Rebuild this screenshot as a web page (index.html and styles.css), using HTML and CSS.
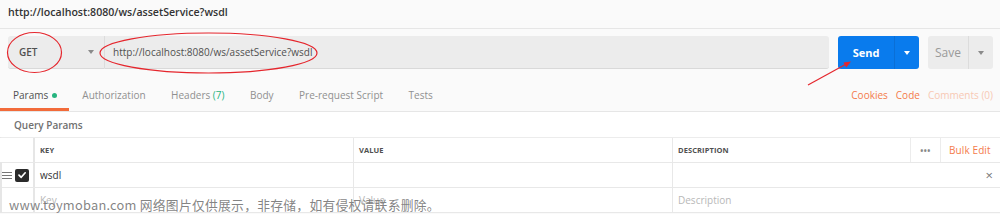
FILE: index.html
```html
<!DOCTYPE html>
<html>
<head>
<meta charset="utf-8">
<link rel="stylesheet" href="styles.css">
</head>
<body>
<div class="page">
  <div class="title-bar">http://localhost:8080/ws/assetService?wsdl</div>
  <div class="request-bar">
    <div class="method">
      <span class="method-name">GET</span>
      <span class="caret caret-gray"></span>
    </div>
    <div class="url">http://localhost:8080/ws/assetService?wsdl</div>
    <div class="send">
      <span class="send-main">Send</span>
      <span class="send-drop"><span class="caret caret-white"></span></span>
    </div>
    <div class="save">
      <span class="save-main">Save</span>
      <span class="save-drop"><span class="caret caret-gray"></span></span>
    </div>
  </div>
  <div class="tabs">
    <div class="tab active">Params <span class="dot"></span></div>
    <div class="tab">Authorization</div>
    <div class="tab">Headers <span class="green">(7)</span></div>
    <div class="tab">Body</div>
    <div class="tab">Pre-request Script</div>
    <div class="tab">Tests</div>
    <div class="tabs-right">
      <span class="link">Cookies</span>
      <span class="link">Code</span>
      <span class="link faded">Comments (0)</span>
    </div>
  </div>
  <div class="content">
    <div class="section-title">Query Params</div>
    <div class="table">
      <div class="row head">
        <div class="c-handle"></div>
        <div class="c-key">KEY</div>
        <div class="c-value">VALUE</div>
        <div class="c-desc">
          <span class="desc-label">DESCRIPTION</span>
          <span class="more">&bull;&bull;&bull;</span>
          <span class="bulk">Bulk Edit</span>
        </div>
      </div>
      <div class="row">
        <div class="c-handle">
          <span class="burger"><i></i><i></i><i></i></span>
          <span class="check">
            <svg width="10" height="10" viewBox="0 0 10 10"><path d="M2 5.2 L4.2 7.3 L8.2 2.8" fill="none" stroke="#fff" stroke-width="1.7" stroke-linecap="round" stroke-linejoin="round"/></svg>
          </span>
        </div>
        <div class="c-key">wsdl</div>
        <div class="c-value"></div>
        <div class="c-desc"><span class="desc-label"></span><span class="close">&times;</span></div>
      </div>
      <div class="row">
        <div class="c-handle"></div>
        <div class="c-key ph">Key</div>
        <div class="c-value ph">Value</div>
        <div class="c-desc ph">Description</div>
      </div>
    </div>
  </div>
  <div class="watermark">www.toymoban.com 网络图片仅供展示，非存储，如有侵权请联系删除。</div>
  <svg class="annot" width="1000" height="214" viewBox="0 0 1000 214">
    <ellipse cx="34.5" cy="52.5" rx="27" ry="20" fill="none" stroke="#e5262d" stroke-width="1.2"/>
    <ellipse cx="208.5" cy="53" rx="108.5" ry="20" fill="none" stroke="#e5262d" stroke-width="1.2"/>
    <line x1="808" y1="85" x2="849" y2="62.5" stroke="#e5262d" stroke-width="1.2"/>
    <path d="M851 61.5 L843.5 62.6 L846.3 67.4 Z" fill="#e5262d"/>
  </svg>
</div>
</body>
</html>
```
FILE: styles.css
```css
* { box-sizing: border-box; }
html, body { margin: 0; padding: 0; }
body {
  width: 1000px;
  height: 214px;
  overflow: hidden;
  background: #fafafa;
  font-family: "Open Sans", "Noto Sans", sans-serif;
  color: #505050;
}
.page { position: relative; width: 1000px; height: 214px; }

.title-bar {
  height: 29px;
  padding: 5px 0 0 8px;
  font-size: 10.6px;
  font-weight: 600;
  color: #333;
  border-bottom: 1px solid #e6e6e6;
}

.request-bar {
  display: flex;
  height: 40px;
  padding: 7px 7px 0 8px;
}
.method {
  width: 96px;
  height: 33px;
  background: #ececec;
  border-radius: 3px 0 0 3px;
  border-bottom: 1px solid #d9d9d9;
  display: flex;
  align-items: center;
  justify-content: space-between;
  padding: 0 10px 0 11px;
  font-size: 10px;
  font-weight: 600;
  color: #505050;
}
.caret {
  display: inline-block;
  width: 0; height: 0;
  border-left: 3.5px solid transparent;
  border-right: 3.5px solid transparent;
  border-top: 4px solid #8a8a8a;
}
.caret-white { border-top-color: #fff; }
.url {
  flex: 1;
  height: 33px;
  background: #ececec;
  border-left: 1px solid #dcdcdc;
  border-bottom: 1px solid #d9d9d9;
  border-radius: 0 3px 3px 0;
  display: flex;
  align-items: center;
  padding-left: 8px;
  font-size: 10px;
  color: #505050;
  margin-right: 9px;
}
.send {
  width: 81px;
  height: 33px;
  display: flex;
  background: #097bed;
  border-radius: 3px;
  color: #fff;
  margin-right: 9px;
}
.send-main {
  width: 57px;
  display: flex;
  align-items: center;
  justify-content: center;
  font-size: 11px;
  font-weight: 700;
  border-right: 1px solid #0a6fd6;
}
.send-drop, .save-drop {
  flex: 1;
  display: flex;
  align-items: center;
  justify-content: center;
}
.save {
  width: 65px;
  height: 33px;
  display: flex;
  background: #ececec;
  border-radius: 3px;
}
.save-main {
  width: 41px;
  display: flex;
  align-items: center;
  justify-content: center;
  font-size: 12px;
  color: #9a9a9a;
  border-right: 1px solid #dcdcdc;
}

.tabs {
  display: flex;
  align-items: stretch;
  height: 43px;
  padding-top: 13px;
  border-bottom: 1px solid #e6e6e6;
  font-size: 10px;
  color: #909090;
}
.tab {
  padding: 0 12.5px 0 13px;
  display: flex;
  align-items: center;
  border-bottom: 3px solid transparent;
  white-space: pre;
}
.tab.active {
  color: #505050;
  border-bottom-color: #f26b3a;
}
.dot {
  display: inline-block;
  width: 5px; height: 5px;
  border-radius: 50%;
  background: #26b47f;
  margin-left: 1px;
}
.green { color: #26b47f; }
.tabs-right {
  margin-left: auto;
  display: flex;
  align-items: center;
  gap: 8px;
  padding-right: 7px;
  padding-bottom: 3px;
}
.link { color: #f47b4a; }
.link.faded { color: #f8c9b4; }

.content { background: #fff; height: 101px; }
.section-title {
  height: 25px;
  padding: 6px 0 0 14px;
  font-size: 10px;
  font-weight: 600;
  color: #707070;
}
.table {
  border-top: 1px solid #ececec;
  border-left: 2px solid #e6e6e6;
}
.row {
  display: flex;
  height: 25px;
  border-bottom: 1px solid #e8e8e8;
  font-size: 10px;
  color: #333;
}
.row > div { display: flex; align-items: center; }
.c-handle {
  width: 35px;
  border-right: 2px solid #e6e6e6;
  padding-left: 2px;
  margin-left: -2px;
}
.c-key { width: 319px; padding-left: 5px; border-right: 1px solid #e8e8e8; }
.c-value { width: 319px; padding-left: 5px; border-right: 1px solid #e8e8e8; }
.c-desc { flex: 1; padding-left: 5px; }
.head { font-size: 7.5px; font-weight: 700; color: #505050; letter-spacing: 0.1px; }
.head .c-handle { background: #fff; }
.desc-label { flex: 1; }
.more {
  width: 31px;
  height: 100%;
  display: flex;
  align-items: center;
  justify-content: center;
  border-left: 1px solid #ececec;
  border-right: 1px solid #ececec;
  color: #888;
  font-size: 8px;
  letter-spacing: 0.5px;
}
.bulk {
  width: 59px;
  padding-left: 8px;
  font-size: 10px;
  font-weight: 400;
  color: #f47b4a;
}
.close { color: #777; font-size: 13px; padding-right: 7px; line-height: 1; }
.ph { color: #b8b8b8; }
.burger { display: flex; flex-direction: column; gap: 2px; width: 10px; margin-right: 3px; }
.burger i { display: block; height: 1px; background: #777; }
.check {
  width: 14px; height: 13px;
  background: #2b2b2b;
  border-radius: 2px;
  display: flex;
  align-items: center;
  justify-content: center;
}
.watermark {
  position: absolute;
  left: 9px;
  top: 195px;
  font-family: "Noto Sans CJK SC", "Noto Sans", sans-serif;
  font-size: 12.8px;
  color: rgba(110, 110, 110, 0.85);
  white-space: nowrap;
  letter-spacing: 0.25px;
}
.annot { position: absolute; left: 0; top: 0; pointer-events: none; }
```
